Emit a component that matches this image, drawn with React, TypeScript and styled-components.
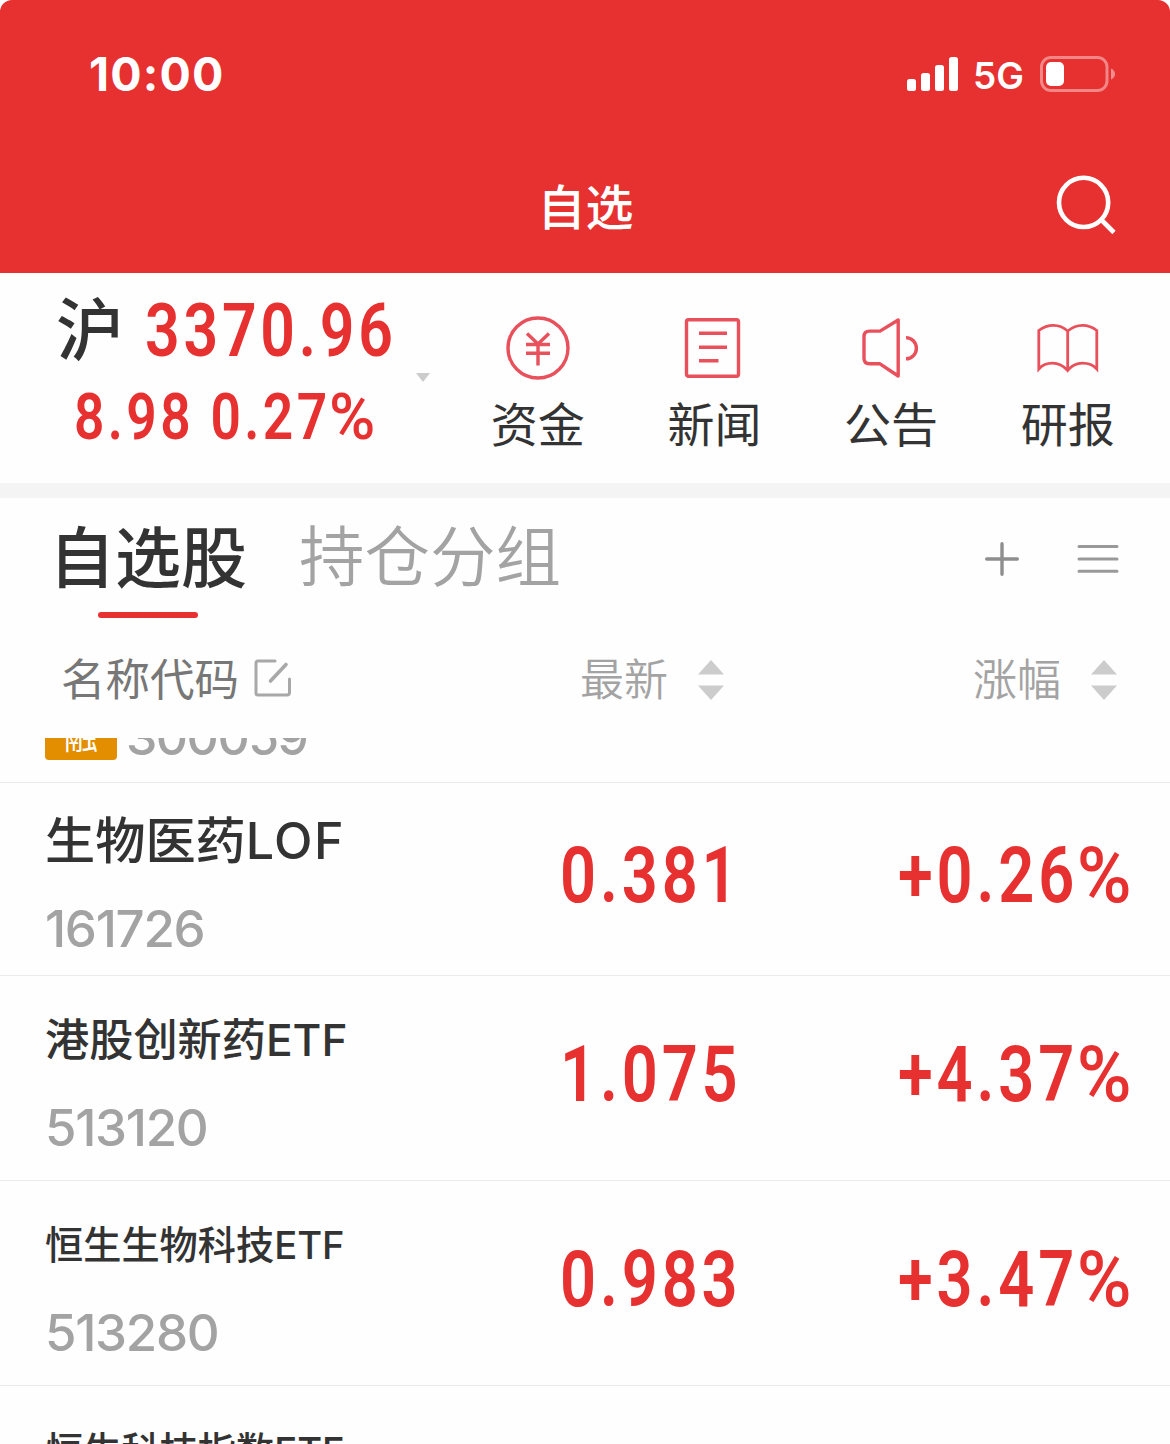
import React from "react";
import styled, { createGlobalStyle } from "styled-components";

const RED = "#e73030";
const SANS = `Inter, "Noto Sans CJK SC", sans-serif`;

const GlobalStyle = createGlobalStyle`
  body { margin: 0; background: #fff; }
`;

const Screen = styled.main`
  width: 1170px;
  height: 1444px;
  overflow: hidden;
  display: flex;
  flex-direction: column;
  background: #fefefe;
  color: #333;
  font-family: ${SANS};
`;

/* ---------- header ---------- */

const Header = styled.header`
  height: 273px;
  flex: none;
  background: ${RED};
  color: #fff;
  border-radius: 12px 12px 0 0;
`;

const StatusBar = styled.div`
  height: 144px;
  box-sizing: border-box;
  padding: 5px 54px 0 89px;
  display: flex;
  align-items: center;
  justify-content: space-between;
`;

const Clock = styled.span`
  font-size: 46.5px;
  font-weight: 750;
  line-height: 58px;
  padding-bottom: 1px;
  letter-spacing: 1.2px;
`;

const StatusIcons = styled.div`
  display: flex;
  align-items: center;
  margin-bottom: 2px;
`;

const Network = styled.span`
  width: 81px;
  flex: none;
  box-sizing: border-box;
  padding: 5px 0 0 14px;
  font-size: 37px;
  font-weight: 600;
  line-height: 44px;
`;

const TitleBar = styled.div`
  height: 128px;
  padding: 0 54px 0 55px;
  display: grid;
  grid-template-columns: 1fr auto 1fr;
  align-items: center;
`;

const Title = styled.h1`
  grid-column: 2;
  margin: 0;
  font-size: 48px;
  font-weight: 500;
  line-height: 64px;
`;

const SearchButton = styled.div`
  justify-self: end;
  display: flex;
  padding-bottom: 6px;
`;

/* ---------- index strip ---------- */

const IndexStrip = styled.section`
  height: 210px;
  flex: none;
  display: flex;
  padding-right: 14px;
  box-sizing: border-box;
`;

const IndexQuote = styled.div`
  width: 450px;
  flex: none;
  box-sizing: border-box;
  padding: 22px 0 0 56px;
  display: flex;
`;

const QuoteLines = styled.div`
  width: 360px;
  flex: none;
`;

const QuoteLine = styled.div<{ $indent?: number; $top?: number }>`
  display: flex;
  align-items: center;
  height: 70px;
  padding-left: ${(p) => p.$indent ?? 0}px;
  margin-top: ${(p) => p.$top ?? 0}px;
`;

const Market = styled.span`
  width: 89px;
  flex: none;
  font-size: 68px;
  font-weight: 500;
  line-height: 70px;
`;

const Figure = styled.span<{ $size: number; $spacing?: number }>`
  display: block;
  padding-top: 2px;
  transform: scaleX(0.82);
  transform-origin: left center;
  white-space: nowrap;
  color: ${RED};
  font-family: Roboto, sans-serif;
  font-size: ${(p) => p.$size}px;
  font-weight: 600;
  line-height: 1;
  letter-spacing: ${(p) => p.$spacing ?? 4.7}px;
`;

const Percent = styled.span`
  display: inline-block;
  margin-left: -2px;
  transform: scaleX(1.18);
  transform-origin: left center;
  font-weight: 500;
`;

const Caret = styled.i`
  width: 0;
  height: 0;
  margin-top: 78px;
  border: 7px solid transparent;
  border-top: 9px solid #ccc;
  border-bottom: 0;
`;

const Shortcuts = styled.nav`
  flex: 1;
  display: flex;
  margin-left: -0.5px;
`;

const Shortcut = styled.div`
  flex: 1;
  display: flex;
  flex-direction: column;
  align-items: center;
  padding-top: 43px;
  gap: 15px;
  font-size: 47px;
  font-weight: 400;
  line-height: 60px;
`;

const Divider = styled.div`
  height: 15px;
  flex: none;
  background: #f4f4f4;
`;

/* ---------- group tabs ---------- */

const Tabs = styled.div`
  height: 120px;
  flex: none;
  box-sizing: border-box;
  padding: 0 51px 0 49px;
  display: flex;
`;

const Tab = styled.div<{ $active?: boolean }>`
  display: flex;
  flex-direction: column;
  align-items: center;
  gap: 4px;
  height: 120px;
  padding-top: 10px;
  box-sizing: border-box;
  margin-right: 52px;
  font-size: ${(p) => (p.$active ? 66 : 65.5)}px;
  line-height: 100px;
  font-weight: ${(p) => (p.$active ? 500 : 350)};
  color: ${(p) => (p.$active ? "#333" : "#a3a3a3")};

  &::after {
    content: "";
    width: 100px;
    height: 6px;
    flex: none;
    border-radius: 3px;
    background: ${(p) => (p.$active ? RED : "transparent")};
  }
`;

const TabTools = styled.div`
  margin-left: auto;
  height: 121px;
  display: flex;
  align-items: center;
  gap: 58px;
`;

/* ---------- column heads ---------- */

const ColumnHeads = styled.div`
  height: 120px;
  flex: none;
  display: grid;
  grid-template-columns: 519px 393px 1fr;
  align-items: center;
  padding: 3px 0 0 61px;
  box-sizing: border-box;
  line-height: 60px;
`;

const Head = styled.div<{ $strong?: boolean }>`
  display: flex;
  align-items: center;
  gap: ${(p) => (p.$strong ? 15 : 30)}px;
  font-size: ${(p) => (p.$strong ? 44.5 : 44)}px;
  font-weight: ${(p) => (p.$strong ? 400 : 350)};
  color: ${(p) => (p.$strong ? "#777" : "#a3a3a3")};
`;

/* ---------- list ---------- */

const List = styled.section`
  flex: 1;
  min-height: 0;
  overflow: hidden;
`;

const ClippedRow = styled.div`
  height: 45px;
  box-sizing: border-box;
  overflow: hidden;
  display: flex;
  align-items: flex-end;
  padding: 0 0 22px 45px;
  border-bottom: 1px solid #ebebeb;
`;

const Badge = styled.span`
  width: 72px;
  height: 48px;
  margin-right: 9px;
  border-radius: 4px;
  background: #e28e00;
  color: #fff;
  font-size: 34px;
  line-height: 50px;
  text-align: center;
`;

const Code = styled.span`
  font-size: 51px;
  font-weight: 450;
  line-height: 60px;
  letter-spacing: -1.3px;
  color: #a3a3a3;
`;

const ClippedCode = styled(Code)`
  font-size: 50px;
  line-height: 46px;
  letter-spacing: -1.5px;
`;

const Row = styled.div<{ $height: number }>`
  height: ${(p) => p.$height}px;
  box-sizing: border-box;
  border-bottom: 1px solid #ebebeb;
  display: grid;
  grid-template-columns: 515px 338px 1fr;
  align-items: center;
  padding-left: 45px;
`;

const NameCell = styled.div`
  height: 148px;
  padding-top: 12px;
  display: flex;
  flex-direction: column;
  gap: 28px;
`;

const Name = styled.span<{ $size: number }>`
  height: 60px;
  font-size: ${(p) => p.$size}px;
  font-weight: 500;
  line-height: 60px;
  white-space: nowrap;
`;

const FundType = styled.span<{ $spacing?: number }>`
  letter-spacing: ${(p) => p.$spacing ?? 0}px;
`;

const ValueCell = styled.div`
  padding-bottom: 7px;
`;

/* ---------- icons ---------- */

const line = { fill: "none", stroke: "#e8505b", strokeWidth: 3.4 } as const;

const SignalIcon = () => (
  <svg width="52" height="34" fill="#fff">
    <rect x="0" y="22" width="9" height="12" rx="2.5" />
    <rect x="14" y="16" width="9" height="18" rx="2.5" />
    <rect x="28" y="8" width="9" height="26" rx="2.5" />
    <rect x="42" y="0" width="9" height="34" rx="2.5" />
  </svg>
);

const BatteryIcon = () => (
  <svg width="76" height="36">
    <rect x="1.5" y="1.5" width="65.5" height="33" rx="9.5" fill="none" stroke="#fff" strokeOpacity="0.42" strokeWidth="3" />
    <rect x="6" y="6" width="18" height="24" rx="5" fill="#fff" />
    <path d="M71 12.5Q75 14.5 75 18T71 23.5Z" fill="#fff" fillOpacity="0.45" />
  </svg>
);

const SearchIcon = () => (
  <svg width="60" height="60" fill="none" stroke="#fff" strokeWidth="4.6">
    <circle cx="27.6" cy="27.4" r="24.6" />
    <path d="M45 44.5L58 57.5" />
  </svg>
);

const MoneyIcon = () => (
  <svg width="64" height="64" {...line}>
    <circle cx="32" cy="32" r="30" />
    <path d="M21 17.5L32 28L43 17.5M20 28.5H44M20 37.2H44M32 28V49.5" />
  </svg>
);

const NewsIcon = () => (
  <svg width="64" height="64" {...line}>
    <rect x="4.5" y="3.8" width="52" height="56.5" rx="2" />
    <path d="M17 17.3H45M17 31.2H45M17 44.8H36.5" />
  </svg>
);

const SpeakerIcon = () => (
  <svg width="64" height="64" {...line}>
    <path d="M39.2 4V60L21 47.8H10.5Q5 47.8 5 42.3V20.6Q5 15.1 10.5 15.1H21Z" strokeLinejoin="round" />
    <path d="M47 21.6A10.4 10.6 0 0 1 47 42.8" />
  </svg>
);

const BookIcon = () => (
  <svg width="64" height="64" {...line} strokeWidth={2.8}>
    <path d="M31.7 15Q25.5 9.3 17.5 9.3T2.8 14.5V53Q8 47.2 16.5 47.2T31.7 54.5Q37.5 47.2 46.5 47.2T60.8 53V14.5Q54.5 9.3 46.5 9.3T31.7 15V54.5" />
  </svg>
);

const PlusIcon = () => (
  <svg width="34" height="34" stroke="#8e8e8e" strokeWidth="3.4" strokeLinecap="round">
    <path d="M17 1.7V32.3M1.7 17H32.3" />
  </svg>
);

const MenuIcon = () => (
  <svg width="42" height="30" stroke="#999" strokeWidth="3" strokeLinecap="round">
    <path d="M2 2.5H40M2 15H40M2 27.2H40" />
  </svg>
);

const EditIcon = () => (
  <svg width="38" height="41" fill="none" stroke="#a8a8a8" strokeWidth="3" strokeLinecap="round">
    <path d="M21 2H4Q2 2 2 4V34Q2 36 4 36H33Q35.5 36 35.5 33.5V20" />
    <path d="M16.5 22L32 5.5" strokeWidth="3.6" />
  </svg>
);

const SortIcon = () => (
  <svg width="26" height="40" fill="#ccc">
    <path d="M13 0L26 14.5H0ZM13 40L26 25.5H0Z" />
  </svg>
);

/* ---------- data ---------- */

const shortcuts = [
  { label: "资金", icon: <MoneyIcon /> },
  { label: "新闻", icon: <NewsIcon /> },
  { label: "公告", icon: <SpeakerIcon /> },
  { label: "研报", icon: <BookIcon /> },
];

type Stock = {
  name: string;
  type: string;
  spacing?: number;
  size: number;
  height: number;
  code?: string;
  price?: string;
  change?: string;
};

const stocks: Stock[] = [
  { name: "生物医药", type: "LOF", spacing: 1.4, size: 50.2, height: 193, code: "161726", price: "0.381", change: "+0.26" },
  { name: "港股创新药", type: "ETF", size: 44.2, height: 205, code: "513120", price: "1.075", change: "+4.37" },
  { name: "恒生生物科技", type: "ETF", size: 38.2, height: 205, code: "513280", price: "0.983", change: "+3.47" },
  { name: "恒生科技指数", type: "ETF", size: 38.2, height: 207 },
];

const StockRow = ({ name, type, spacing, size, height, code, price, change }: Stock) => (
  <Row $height={height}>
    <NameCell>
      <Name $size={size}>
        {name}
        <FundType $spacing={spacing}>{type}</FundType>
      </Name>
      {code && <Code>{code}</Code>}
    </NameCell>
    <ValueCell>{price && <Figure $size={77}>{price}</Figure>}</ValueCell>
    <ValueCell>
      {change && (
        <Figure $size={77}>
          {change}
          <Percent>%</Percent>
        </Figure>
      )}
    </ValueCell>
  </Row>
);

export default function App() {
  return (
    <Screen>
      <GlobalStyle />
      <Header>
        <StatusBar>
          <Clock>10:00</Clock>
          <StatusIcons>
            <SignalIcon />
            <Network>5G</Network>
            <BatteryIcon />
          </StatusIcons>
        </StatusBar>
        <TitleBar>
          <Title>自选</Title>
          <SearchButton>
            <SearchIcon />
          </SearchButton>
        </TitleBar>
      </Header>

      <IndexStrip>
        <IndexQuote>
          <QuoteLines>
            <QuoteLine>
              <Market>沪</Market>
              <Figure $size={74} $spacing={4.6}>3370.96</Figure>
            </QuoteLine>
            <QuoteLine $indent={18} $top={16}>
              <Figure $size={65} $spacing={4.1}>
                8.98 0.27<Percent>%</Percent>
              </Figure>
            </QuoteLine>
          </QuoteLines>
          <Caret />
        </IndexQuote>
        <Shortcuts>
          {shortcuts.map((s) => (
            <Shortcut key={s.label}>
              {s.icon}
              {s.label}
            </Shortcut>
          ))}
        </Shortcuts>
      </IndexStrip>

      <Divider />

      <Tabs>
        <Tab $active>自选股</Tab>
        <Tab>持仓分组</Tab>
        <TabTools>
          <PlusIcon />
          <MenuIcon />
        </TabTools>
      </Tabs>

      <ColumnHeads>
        <Head $strong>
          名称代码
          <EditIcon />
        </Head>
        <Head>
          最新
          <SortIcon />
        </Head>
        <Head>
          涨幅
          <SortIcon />
        </Head>
      </ColumnHeads>

      <List>
        <ClippedRow>
          <Badge>融</Badge>
          <ClippedCode>300059</ClippedCode>
        </ClippedRow>
        {stocks.map((s) => (
          <StockRow key={s.name} {...s} />
        ))}
      </List>
    </Screen>
  );
}
